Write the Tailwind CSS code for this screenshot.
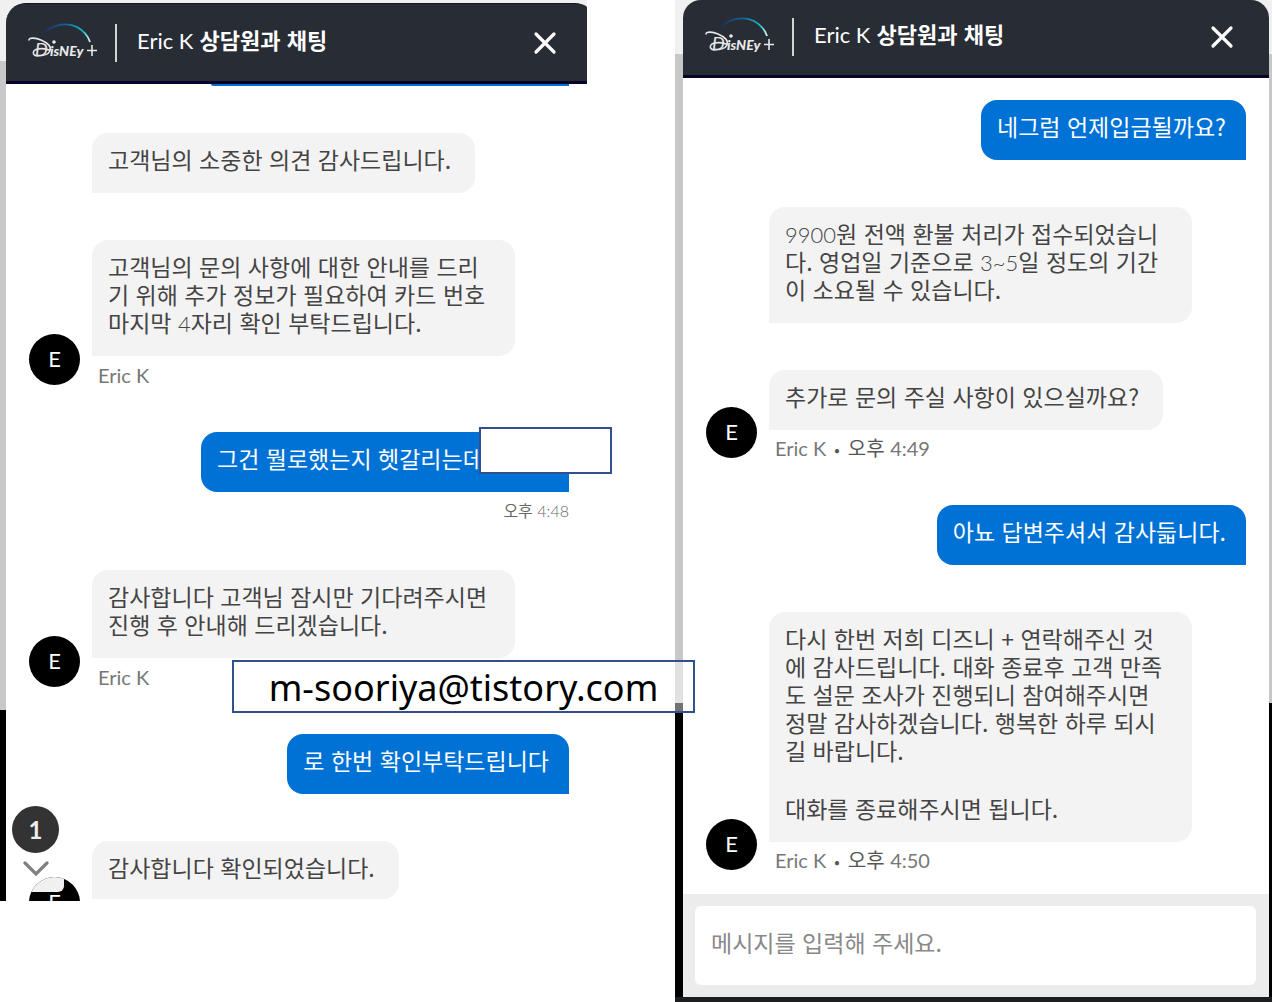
<!DOCTYPE html>
<html lang="ko">
  <head>
    <meta charset="UTF-8" />
    <meta name="viewport" content="width=device-width, initial-scale=1.0" />
    <script src="https://cdn.jsdelivr.net/npm/@tailwindcss/browser@4"></script>
    <title>Disney+ 상담원과 채팅</title>
  </head>
  <body class="bg-white font-['Noto_Sans_CJK_KR',sans-serif] text-[23px]/[28px] text-[#444]">
    <svg class="absolute size-0">
      <defs>
        <linearGradient id="arc" x1="0" x2="1" y1="0" y2="0">
          <stop offset="0" stop-color="#1f2c58" />
          <stop offset="0.5" stop-color="#14659c" />
          <stop offset="0.85" stop-color="#15c0cc" />
          <stop offset="1" stop-color="#d8f4f4" />
        </linearGradient>
      </defs>
      <symbol id="logo" viewBox="0 0 72 44">
        <path d="M18 12C27 3 42 1 51 6C58 10 62 15 64 21" fill="none" stroke="url(#arc)" stroke-width="1.8" />
        <path d="M3 19C3 16 10 17 15 19C22 22 26 26 24 30C22 34 16 35 11 35C6 34 6 29 12 28C16 27 20 28 23 29" fill="none" stroke="#e8e8e8" stroke-width="1.600" stroke-linecap="round" />
        <circle cx="28" cy="21" r="1.800" fill="#e8e8e8" />
        <text x="9" y="35" font-family="Lato" font-size="18" font-weight="400" font-style="italic" fill="#e8e8e8">D</text>
        <text x="24" y="35" font-family="Lato" font-size="14" font-weight="900" font-style="italic" fill="#e8e8e8">isNEy</text>
        <path d="M61 29.500H71M66 24V35" fill="none" stroke="#e8e8e8" stroke-width="1.600" />
      </symbol>
    </svg>

    <div class="grid grid-cols-[587fr_88fr_597fr] items-start">
      <!-- first chat -->
      <section class="relative bg-[linear-gradient(to_bottom,#f0f0f0_61px,#c8c8c8_61px,#c8c8c8_710px,#000_710px)] pl-1.5">
        <div class="overflow-hidden bg-[#f0f0f0] pt-[3px]">
          <header class="-mr-2 flex h-[81px] items-center rounded-t-[20px] border-t border-b-3 border-t-[#15181e] border-b-[#05052b] bg-[#282c34] pl-5 pr-9 text-white">
            <svg class="h-11 w-18 shrink-0" role="img" aria-label="Disney+"><use href="#logo" /></svg>
            <span class="ml-[17px] h-[38px] w-0.5 bg-[#d4d4d4]"></span>
            <h1 class="ml-5 flex-1 pb-1.5 text-[22px] font-bold"><span class="font-['Lato'] font-normal">Eric K</span> 상담원과 채팅</h1>
            <button type="button" aria-label="닫기">
              <svg class="size-7" viewBox="0 0 28 28" fill="none" stroke="#fff" stroke-width="3.200" stroke-linecap="round"><path d="M5 5L23 23M23 5L5 23" /></svg>
            </button>
          </header>
        </div>

        <main class="flex flex-col gap-[47px] bg-white pl-[23px] pr-[18px]">
          <div class="ml-auto h-0.5 w-[358px] rounded-bl-full bg-[#0072d6]"></div>

          <div class="ml-[63px] w-fit rounded-t-2xl rounded-br-2xl bg-[#f3f3f3] pt-3 pr-6 pb-5 pl-4">고객님의 소중한 의견 감사드립니다.</div>

          <div class="flex items-end gap-3">
            <span class="flex size-[51px] shrink-0 items-center justify-center rounded-full bg-black pb-0.5 font-['Lato'] text-[22px] text-white">E</span>
            <div>
              <div class="min-w-[423px] rounded-t-2xl rounded-br-2xl bg-[#f3f3f3] px-4 pt-3 pb-5 whitespace-nowrap">고객님의 문의 사항에 대한 안내를 드리<br />기 위해 추가 정보가 필요하여 카드 번호<br />마지막 <span class="font-['Lato'] text-[22px] leading-none font-light">4</span>자리 확인 부탁드립니다.</div>
              <p class="mt-[9px] ml-1.5 font-['Lato'] text-xl/[20px] text-[#777]">Eric K</p>
            </div>
          </div>

          <div class="relative flex flex-col items-end">
            <div class="w-[368px] rounded-t-2xl rounded-bl-2xl bg-[#0072d6] px-4 pt-3 pb-5 whitespace-nowrap text-white">그건 뭘로했는지 헷갈리는데</div>
            <time class="mt-[7px] h-6 text-base/[22px] text-[#666]">오후 <span class="font-['Lato'] leading-none font-light">4:48</span></time>
            <span class="absolute -top-[5px] -right-[43px] h-[47px] w-[133px] border-2 border-[#2f528f] bg-white"></span>
          </div>

          <div class="flex items-end gap-3">
            <span class="flex size-[51px] shrink-0 items-center justify-center rounded-full bg-black pb-0.5 font-['Lato'] text-[22px] text-white">E</span>
            <div>
              <div class="min-w-[423px] rounded-t-2xl rounded-br-2xl bg-[#f3f3f3] px-4 pt-3 pb-5 whitespace-nowrap">감사합니다 고객님 잠시만 기다려주시면<br />진행 후 안내해 드리겠습니다.</div>
              <p class="mt-[9px] ml-1.5 font-['Lato'] text-xl/[20px] text-[#777]">Eric K</p>
            </div>
          </div>

          <div class="relative flex justify-end">
            <div class="rounded-t-2xl rounded-bl-2xl bg-[#0072d6] pt-3 pr-5 pb-5 pl-4 text-white">로 한번 확인부탁드립니다</div>
            <p class="absolute -top-[74px] -right-[126px] z-10 flex h-[53px] w-[463px] items-center justify-center border-2 border-[#2f528f] bg-white/45 pt-0.5 font-['Noto_Sans'] text-4xl text-black">m-sooriya@tistory.com</p>
          </div>

          <div class="flex items-end gap-3">
            <div class="relative h-6 w-[51px] shrink-0 overflow-hidden">
              <span class="flex size-[51px] items-center justify-center rounded-full bg-black pb-0.5 font-['Lato'] text-[22px] text-white">E</span>
              <span class="absolute top-0 left-0 size-[51px] overflow-hidden rounded-full"><span class="block h-[15px] w-[35px] rounded-br-md bg-[#f0f0f0]"></span></span>
            </div>
            <div class="mb-0.5 rounded-t-2xl rounded-br-2xl bg-[#f3f3f3] pt-3 pr-6 pb-[18px] pl-4">감사합니다 확인되었습니다.</div>
          </div>
        </main>

        <button type="button" class="absolute bottom-6 left-3 flex flex-col items-center gap-2" aria-label="새 메시지 1개">
          <span class="flex size-[47px] items-center justify-center rounded-full bg-[#333] font-['Lato'] text-2xl font-bold text-[#eee]">1</span>
          <svg class="h-4 w-7" viewBox="0 0 28 16" fill="none" stroke="#808080" stroke-width="3.200" stroke-linecap="round"><path d="M3 2L14 13L25 2" /></svg>
        </button>
      </section>

      <!-- second chat -->
      <section class="col-start-3 flex min-h-screen flex-col border-b-5 border-[#1c1e1f] bg-[linear-gradient(to_bottom,#f0f0f0_54px,#c8c8c8_54px,#c8c8c8_703px,#000_703px)] pl-2 pr-[3px]">
        <header class="flex h-[78px] items-center rounded-t-[18px] border-b-3 border-[#05052b] bg-[#282c34] pl-5 pr-[33px] pb-0.5 text-white">
          <svg class="h-11 w-18 shrink-0" role="img" aria-label="Disney+"><use href="#logo" /></svg>
          <span class="ml-[17px] h-[38px] w-0.5 bg-[#d4d4d4]"></span>
          <h1 class="ml-5 flex-1 pb-1.5 text-[22px] font-bold"><span class="font-['Lato'] font-normal">Eric K</span> 상담원과 채팅</h1>
          <button type="button" aria-label="닫기">
            <svg class="size-7" viewBox="0 0 28 28" fill="none" stroke="#fff" stroke-width="3.200" stroke-linecap="round"><path d="M5 5L23 23M23 5L5 23" /></svg>
          </button>
        </header>

        <main class="flex flex-1 flex-col gap-[47px] bg-white px-[23px] pt-[22px]">
          <div class="ml-auto rounded-t-2xl rounded-bl-2xl bg-[#0072d6] pt-3 pr-5 pb-5 pl-4 text-white">네그럼 언제입금될까요?</div>

          <div class="ml-[63px] w-fit min-w-[423px] rounded-t-2xl rounded-br-2xl bg-[#f3f3f3] px-4 pt-3 pb-5 whitespace-nowrap"><span class="font-['Lato'] text-[22px] leading-none font-light">9900</span>원 전액 환불 처리가 접수되었습니<br />다. 영업일 기준으로 <span class="font-['Lato'] text-[22px] leading-none font-light">3~5</span>일 정도의 기간<br />이 소요될 수 있습니다.</div>

          <div class="flex items-end gap-3">
            <span class="flex size-[51px] shrink-0 items-center justify-center rounded-full bg-black pb-0.5 font-['Lato'] text-[22px] text-white">E</span>
            <div>
              <div class="w-fit rounded-t-2xl rounded-br-2xl bg-[#f3f3f3] pt-3 pr-6 pb-5 pl-4">추가로 문의 주실 사항이 있으실까요?</div>
              <p class="mt-2 ml-1.5 h-5 text-xl/[20px] text-[#555]"><span class="font-['Lato'] leading-none text-[#777]">Eric K</span><span class="mx-2 text-base leading-none">•</span>오후 <span class="font-['Lato'] leading-none text-[#777]">4:49</span></p>
            </div>
          </div>

          <div class="ml-auto rounded-t-2xl rounded-bl-2xl bg-[#0072d6] pt-3 pr-5 pb-5 pl-4 text-white">아뇨 답변주셔서 감사듧니다.</div>

          <div class="flex items-end gap-3">
            <span class="flex size-[51px] shrink-0 items-center justify-center rounded-full bg-black pb-0.5 font-['Lato'] text-[22px] text-white">E</span>
            <div>
              <div class="min-w-[423px] rounded-t-2xl rounded-br-2xl bg-[#f3f3f3] px-4 pt-3 pb-5 whitespace-nowrap">
                <p>다시 한번 저희 디즈니 + 연락해주신 것<br />에 감사드립니다. 대화 종료후 고객 만족<br />도 설문 조사가 진행되니 참여해주시면<br />정말 감사하겠습니다. 행복한 하루 되시<br />길 바랍니다.</p>
                <p class="mt-[30px]">대화를 종료해주시면 됩니다.</p>
              </div>
              <p class="mt-2 ml-1.5 h-5 text-xl/[20px] text-[#555]"><span class="font-['Lato'] leading-none text-[#777]">Eric K</span><span class="mx-2 text-base leading-none">•</span>오후 <span class="font-['Lato'] leading-none text-[#777]">4:50</span></p>
            </div>
          </div>
        </main>

        <form class="bg-[#ececec] py-3 pr-[13px] pl-3">
          <input type="text" aria-label="메시지" placeholder="메시지를 입력해 주세요." class="block h-[79px] w-full rounded-md bg-white px-4 pb-2 placeholder:text-[#888]" />
        </form>
      </section>
    </div>
  </body>
</html>
